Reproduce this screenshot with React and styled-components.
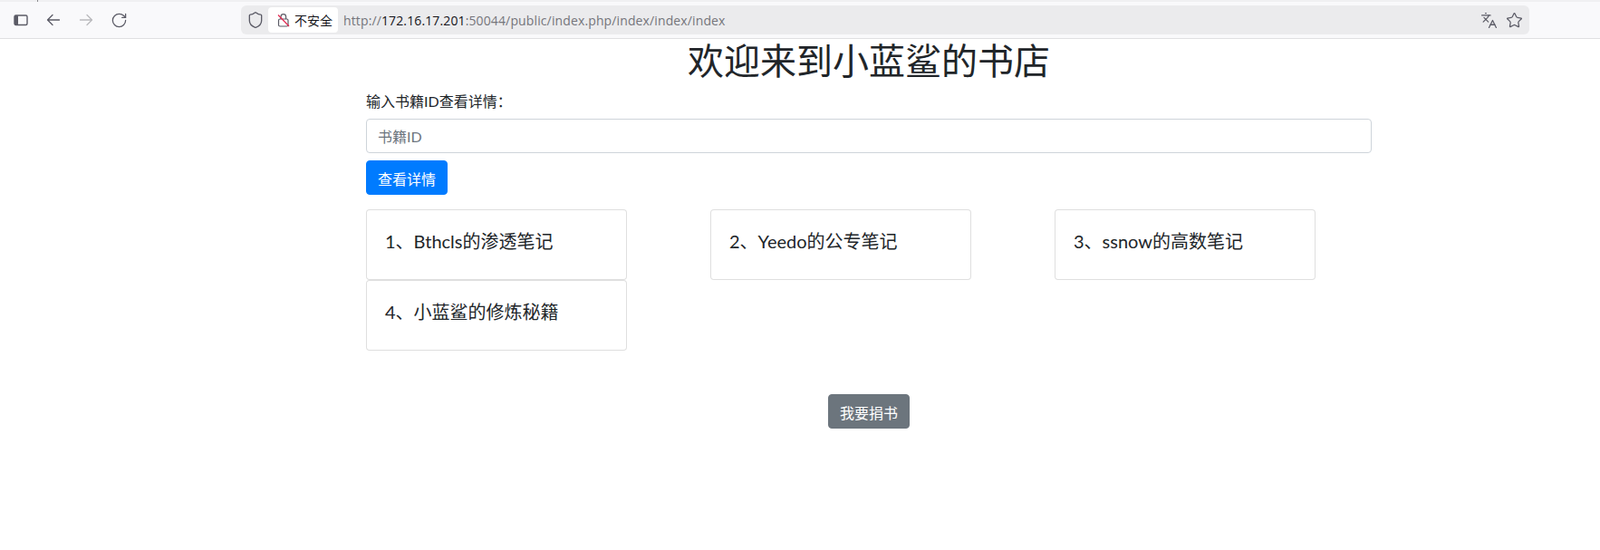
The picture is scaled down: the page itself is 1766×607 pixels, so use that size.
import React from 'react';
import styled, { createGlobalStyle } from 'styled-components';
import { RotateCw, Shield, Star, Languages } from 'lucide-react';

const GlobalStyle = createGlobalStyle`
  html, body {
    margin: 0;
    padding: 0;
    background: #fff;
  }
  * { box-sizing: border-box; }
  body {
    font-family: Lato, "Noto Sans CJK SC", sans-serif;
    font-size: 16px;
    line-height: 1.5;
    color: #212529;
  }
`;

const Chrome = styled.header`
  height: 43px;
  background: #f9f9fb;
  border-bottom: 1px solid #e0e0e2;
`;

const TopStrip = styled.div`
  height: 2px;
  background: #f0f0f2;
`;

const Tick = styled.div`
  width: 1px;
  height: 2px;
  margin-left: 41px;
  background: #8a8a8e;
`;

const Toolbar = styled.div`
  display: flex;
  align-items: center;
  height: 40px;
  padding: 0 0 0 15px;
`;

const NavIcon = styled.span`
  display: flex;
  flex: none;
  width: 16px;
  height: 16px;
  margin-right: ${p => p.$gap}px;
  color: ${p => (p.$off ? '#b9b9bd' : '#5b5b66')};
  align-items: center;
  justify-content: center;

  svg {
    flex: none;
  }
`;

const AddressBar = styled.div`
  display: flex;
  align-items: center;
  width: 1422px;
  height: 32px;
  padding: 0 7px 0 8px;
  background: #ebebed;
  border-radius: 6px;
`;

const SecurityChip = styled.div`
  display: flex;
  flex: none;
  align-items: center;
  gap: 5px;
  width: 77px;
  height: 28px;
  margin-left: 6px;
  padding-left: 10px;
  background: #fff;
  border-radius: 4px;
  font-size: 14px;
  color: #15141a;
`;

const Url = styled.div`
  flex: 1;
  margin-left: 6px;
  font-family: "Open Sans", sans-serif;
  font-size: 14px;
  letter-spacing: 0.125px;
  color: #75757b;
  white-space: nowrap;
`;

const Host = styled.span`
  color: #15141a;
`;

const BarActions = styled.div`
  display: flex;
  align-items: center;
  gap: 9px;
  color: #5b5b66;
`;

const Container = styled.main`
  width: 1140px;
  margin-left: 389px;
  padding: 0 15px;
`;

const Title = styled.h1`
  margin: 0 0 8px;
  padding-top: 1px;
  font-size: 40px;
  font-weight: 400;
  line-height: 47px;
  text-align: center;
`;

const FormGroup = styled.div`
  margin-bottom: 8px;
`;

const Label = styled.label`
  display: block;
  margin-bottom: 8px;
  padding-top: 2px;
  font-size: 16px;
  line-height: 22px;
`;

const Input = styled.input`
  display: block;
  width: 100%;
  height: 38px;
  padding: 6px 12px;
  font: inherit;
  color: #495057;
  background: #fff;
  border: 1px solid #ced4da;
  border-radius: 4px;
  outline: none;

  &::placeholder {
    color: #6c757d;
    opacity: 1;
  }
`;

const Button = styled.button`
  display: block;
  height: 38px;
  padding: 8px 12px 4px;
  font: inherit;
  color: #fff;
  background: ${p => p.$bg};
  border: 1px solid ${p => p.$bg};
  border-radius: 4px;
`;

const BookGrid = styled.div`
  display: grid;
  grid-template-columns: repeat(3, 380px);
  margin: 16px -15px 0;
`;

const BookCell = styled.div`
  padding: 0 15px;
`;

const BookCard = styled.div`
  width: 288px;
  padding: 22px 20px 20px;
  background: #fff;
  border: 1px solid rgba(0, 0, 0, 0.125);
  border-radius: 4px;
`;

const BookTitle = styled.h5`
  margin: 0 0 10px;
  font-size: 20px;
  font-weight: 400;
  line-height: 1.2;
`;

const DonateRow = styled.div`
  display: flex;
  justify-content: center;
  margin-top: 48px;
`;

const books = ['1、Bthcls的渗透笔记', '2、Yeedo的公专笔记', '3、ssnow的高数笔记', '4、小蓝鲨的修炼秘籍'];

const SidebarIcon = () => (
  <svg width="16" height="16" viewBox="0 0 16 16" fill="none">
    <rect x="1" y="3" width="14" height="10.5" rx="1.5" stroke="#5b5b66" strokeWidth="1.4" />
    <rect x="1" y="3" width="4" height="10.5" rx="1" fill="#5b5b66" />
  </svg>
);

const NavArrow = ({ flip }) => (
  <svg
    width="16"
    height="16"
    viewBox="0 0 16 16"
    fill="none"
    stroke="currentColor"
    strokeWidth="1.3"
    strokeLinecap="round"
    strokeLinejoin="round"
    transform={flip ? 'scale(-1 1)' : undefined}
  >
    <path d="M14.5 8H2M7 2.5 1.5 8 7 13.5" />
  </svg>
);

const InsecureLock = () => (
  <svg width="14" height="16" viewBox="0 0 14 16" fill="none">
    <rect x="1.5" y="7" width="10.5" height="8" rx="1.5" stroke="#5b5b66" strokeWidth="1.2" />
    <path d="M4 7V4.5a2.8 2.8 0 0 1 5.6 0V7" stroke="#5b5b66" strokeWidth="1.2" />
    <path d="M1 2.5 13 15" stroke="#e22850" strokeWidth="1.2" />
  </svg>
);

const App = () => (
  <>
    <GlobalStyle />
    <Chrome>
      <TopStrip>
        <Tick />
      </TopStrip>
      <Toolbar>
        <NavIcon $gap={20}><SidebarIcon /></NavIcon>
        <NavIcon $gap={20}><NavArrow /></NavIcon>
        <NavIcon $gap={20} $off><NavArrow flip /></NavIcon>
        <NavIcon $gap={127}><RotateCw size={19} strokeWidth={1.6} /></NavIcon>
        <AddressBar>
          <NavIcon $gap={0}><Shield size={20} strokeWidth={1.6} /></NavIcon>
          <SecurityChip>
            <InsecureLock />
            不安全
          </SecurityChip>
          <Url>
            http://<Host>172.16.17.201</Host>:50044/public/index.php/index/index/index
          </Url>
          <BarActions>
            <Languages size={19} strokeWidth={1.6} />
            <Star size={19} strokeWidth={1.6} />
          </BarActions>
        </AddressBar>
      </Toolbar>
    </Chrome>
    <Container>
      <Title>欢迎来到小蓝鲨的书店</Title>
      <FormGroup>
        <Label>输入书籍ID查看详情：</Label>
        <Input placeholder="书籍ID" />
      </FormGroup>
      <Button $bg="#007bff">查看详情</Button>
      <BookGrid>
        {books.map(book => (
          <BookCell key={book}>
            <BookCard>
              <BookTitle>{book}</BookTitle>
            </BookCard>
          </BookCell>
        ))}
      </BookGrid>
      <DonateRow>
        <Button $bg="#6c757d">我要捐书</Button>
      </DonateRow>
    </Container>
  </>
);

export default App;
